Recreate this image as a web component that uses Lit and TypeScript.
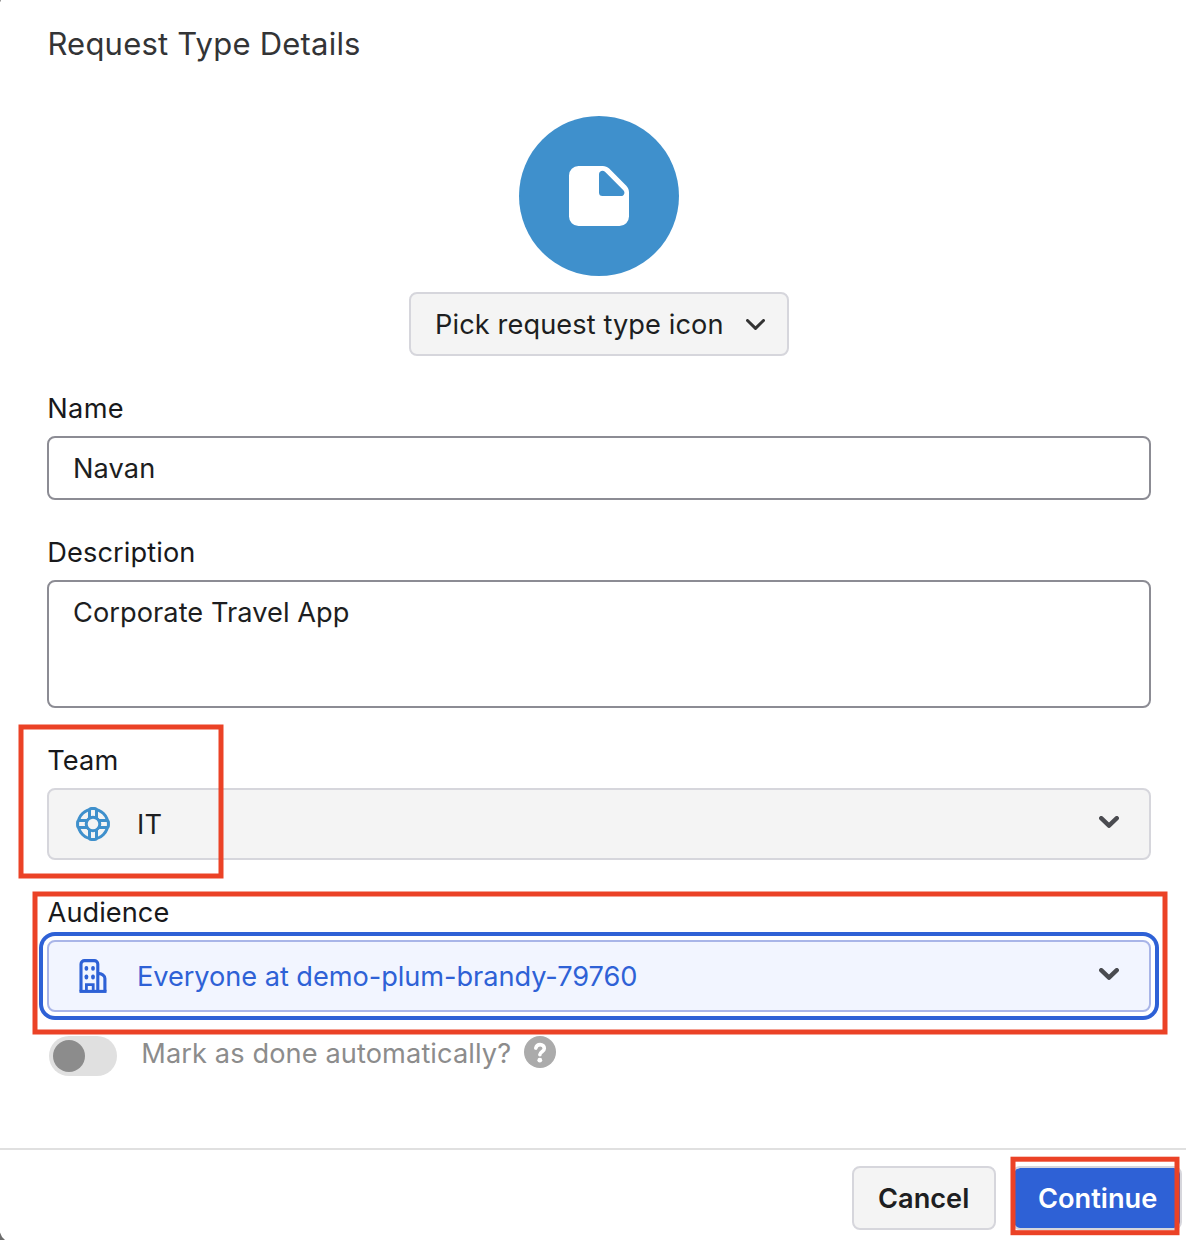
import { LitElement, html, css, svg } from "lit";
import { customElement } from "lit/decorators.js";

const chevron = (width: number, height: number, stroke: number) => {
  const h = stroke / 2;
  return svg`<svg class="chevron" width=${width} height=${height} viewBox="0 0 ${width} ${height}" aria-hidden="true">
    <path d="M${h} ${h}L${width / 2} ${height - h - 0.6}L${width - h} ${h}" fill="none" stroke="currentColor"
      stroke-width=${stroke} stroke-linecap="round" stroke-linejoin="round"/>
  </svg>`;
};

const noteIcon = svg`<svg width="60" height="60" viewBox="0 0 60 60" aria-hidden="true">
  <path fill="#fff" fill-rule="evenodd" d="M9.5 0H33.8C36.2 0 38.5 1 40.2 2.6L57.3 19.8C59 21.5 60 23.8 60 26.2V50.5A9.5 9.5 0 0 1 50.5 60H9.5A9.5 9.5 0 0 1 0 50.5V9.5A9.5 9.5 0 0 1 9.5 0ZM30 8.2V26.5A3.5 3.5 0 0 0 33.5 30H52.2C55.2 30 56.5 26.4 54.4 24.2L36 5.7C33.7 3.5 30 5 30 8.2Z"/>
</svg>`;

const teamIcon = svg`<svg width="34" height="34" viewBox="0 0 34 34" aria-hidden="true">
  <g fill="#f4f4f4" stroke="#3f90cc" stroke-width="3" stroke-linejoin="round">
    <circle cx="17" cy="17" r="14.8"/>
    <rect x="13.5" y="1.6" width="7" height="30.8" rx="2"/>
    <rect x="1.6" y="13.5" width="30.8" height="7" rx="2"/>
    <circle cx="17" cy="17" r="6.8"/>
  </g>
</svg>`;

const buildingIcon = svg`<svg width="28" height="34" viewBox="0 0 28 34" aria-hidden="true">
  <g fill="none" stroke="#2e61d6" stroke-width="3.1">
    <path d="M2 32.4V5A3.5 3.5 0 0 1 5.5 1.6H15.3A3.5 3.5 0 0 1 18.8 5V32.4"/>
    <path d="M19 14.6H20.6C22.5 14.6 25.9 16.8 25.9 19.4V32.4"/>
    <path d="M0.5 32.4H27.5"/>
    <path d="M7.4 32V25.6H14.2V32" stroke-width="2.8"/>
  </g>
  <g fill="#2e61d6">
    <rect x="5.6" y="7" width="3.6" height="4.8" rx="1.7"/>
    <rect x="12.2" y="7" width="3.6" height="4.8" rx="1.7"/>
    <rect x="5.6" y="15.6" width="3.6" height="4.8" rx="1.7"/>
    <rect x="12.2" y="15.6" width="3.6" height="4.8" rx="1.7"/>
  </g>
</svg>`;

const helpIcon = svg`<svg width="32" height="32" viewBox="0 0 32 32" aria-hidden="true">
  <circle cx="16" cy="16" r="16" fill="#ababab"/>
  <path d="M11.8 12.1C12.4 9.6 13.9 8.6 16.1 8.6C18.6 8.6 20.3 10.1 20.3 12.4C20.3 15.5 15.9 15.8 15.9 18.5V18.8" fill="none" stroke="#fff" stroke-width="3.6" stroke-linecap="round"/>
  <circle cx="15.8" cy="24.2" r="2.4" fill="#fff"/>
</svg>`;

@customElement("app-root")
export class AppRoot extends LitElement {
  static styles = css`
    :host {
      display: block;
    }
    * {
      box-sizing: border-box;
    }
    svg {
      display: block;
      flex: none;
    }
    .dialog {
      position: relative;
      display: flex;
      flex-direction: column;
      width: 1186px;
      height: 1240px;
      overflow: hidden;
      background: #fff;
      color: #1d1e21;
      font-family: Inter, "Liberation Sans", sans-serif;
      font-size: 27.2px;
      line-height: 40px;
      letter-spacing: 0.1px;
      white-space: nowrap;
    }
    .content {
      display: flex;
      flex-direction: column;
      padding: 24px 35px 0 47px;
    }
    .title {
      margin: 0;
      padding-left: 0.4px;
      font-size: 31px;
      font-weight: 400;
      letter-spacing: 0.216px;
      color: #333436;
    }
    .avatar {
      display: flex;
      align-items: center;
      justify-content: center;
      align-self: center;
      width: 160px;
      height: 160px;
      margin-top: 52px;
      border-radius: 50%;
      background: #3f90cc;
    }
    .button {
      display: flex;
      align-items: center;
      height: 64px;
      border: 2px solid #d6d6dc;
      border-radius: 8px;
      background: #f4f4f4;
      padding: 2px 24px 0;
    }
    .picker {
      align-self: center;
      justify-content: space-between;
      width: 380px;
      margin-top: 16px;
      padding: 2px 22.5px 0 24px;
    }
    .picker .chevron {
      color: #333;
    }
    .field {
      display: flex;
      flex-direction: column;
      gap: 8px;
      margin-top: 32px;
    }
    .label {
      height: 40px;
      line-height: 42px;
      padding-left: 0.3px;
      color: #18191b;
    }
    .name {
      letter-spacing: 0.3px;
    }
    .audience {
      padding-left: 0.6px;
      letter-spacing: 0.05px;
    }
    .input {
      height: 64px;
      padding: 11px 24px 0;
      border: 2px solid #8c8c94;
      border-radius: 8px;
    }
    .area {
      height: 128px;
      letter-spacing: 0.055px;
    }
    .select {
      display: flex;
      align-items: center;
      height: 72px;
      border: 2px solid #d6d6dc;
      border-radius: 8px;
      background: #f4f4f4;
      padding: 0 30px 0 27px;
    }
    .glyph {
      display: flex;
      justify-content: flex-start;
      width: 61px;
    }
    .select .value {
      flex: 1;
      padding-top: 2px;
    }
    .select .chevron {
      color: #4a4b50;
      margin-top: -4px;
    }
    .focused {
      border-color: #a9b5e8;
      background: #f2f5ff;
      color: #2e61d6;
      letter-spacing: -0.057px;
      box-shadow: 0 0 0 4px #fff, 0 0 0 8px #2e61d6;
    }
    .focused .glyph {
      padding-left: 3px;
    }
    .done {
      display: flex;
      align-items: center;
      height: 40px;
      margin: 24px 0 0 2px;
      color: #8c8c8c;
    }
    .toggle {
      width: 68px;
      height: 40px;
      padding: 4px;
      border-radius: 20px;
      background: #e0e0e0;
    }
    .knob {
      width: 32px;
      height: 32px;
      border-radius: 50%;
      background: #8c8c8c;
    }
    .done-text {
      width: 407px;
      padding: 0 0 4px 24.3px;
    }
    .help {
      padding-bottom: 8px;
    }
    .footer {
      display: flex;
      justify-content: flex-end;
      gap: 16px;
      height: 92px;
      margin-top: auto;
      padding: 16px 4px 0 0;
      border-top: 2px solid #e0e0e0;
      font-weight: 600;
      letter-spacing: 0;
    }
    .cancel {
      width: 144px;
    }
    .continue {
      width: 170px;
      color: #fff;
      background: #2e61d6;
      background-clip: padding-box;
    }
    .marks {
      position: absolute;
      inset: 0;
      pointer-events: none;
    }
  `;

  render() {
    return html`
      <div class="dialog">
        <div class="content">
          <h1 class="title">Request Type Details</h1>
          <div class="avatar">${noteIcon}</div>
          <div class="button picker"><span>Pick request type icon</span>${chevron(19, 11.5, 3)}</div>

          <div class="field">
            <div class="label name">Name</div>
            <div class="input">Navan</div>
          </div>
          <div class="field">
            <div class="label">Description</div>
            <div class="input area">Corporate Travel App</div>
          </div>
          <div class="field">
            <div class="label">Team</div>
            <div class="select">
              <span class="glyph">${teamIcon}</span><span class="value">IT</span>${chevron(20, 12.5, 4.4)}
            </div>
          </div>
          <div class="field">
            <div class="label audience">Audience</div>
            <div class="select focused">
              <span class="glyph">${buildingIcon}</span
              ><span class="value">Everyone at demo-plum-brandy-79760</span>${chevron(20, 12.5, 4.4)}
            </div>
          </div>
          <div class="done">
            <div class="toggle"><div class="knob"></div></div>
            <span class="done-text">Mark as done automatically?</span>
            <span class="help">${helpIcon}</span>
          </div>
        </div>

        <div class="footer">
          <div class="button cancel">Cancel</div>
          <div class="button continue">Continue</div>
        </div>

        <svg class="marks" width="1186" height="1240" viewBox="0 0 1186 1240" aria-hidden="true">
          <path d="M0 1232.5Q1.2 1237 5 1240H0Z" fill="#6c6c6c" />
          <rect width="1" height="1.5" fill="#9a9a9a" />
          <g fill="none" stroke="#eb4226" stroke-width="5">
            <rect x="21" y="727" width="200" height="149" />
            <rect x="35" y="894" width="1130" height="138" />
            <rect x="1013" y="1159.2" width="164" height="73.5" />
          </g>
        </svg>
      </div>
    `;
  }
}
